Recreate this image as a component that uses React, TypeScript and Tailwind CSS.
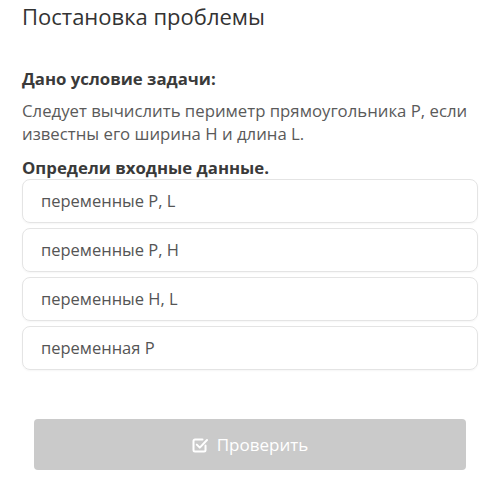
const options = ["переменные Р, L", "переменные Р, Н", "переменные Н, L", "переменная Р"];

function CheckSquareIcon() {
  return (
    <svg viewBox="0 0 16 16" className="h-[16px] w-[16px]" fill="none" stroke="currentColor" strokeWidth={2} strokeLinecap="round" strokeLinejoin="round">
      <path d="M13.5 8.5v4.5a1.5 1.5 0 0 1-1.5 1.5H3a1.5 1.5 0 0 1-1.5-1.5V4A1.5 1.5 0 0 1 3 2.5h7.5" />
      <path d="M4.8 7.6l3 3L15 3" />
    </svg>
  );
}

export default function App() {
  return (
    <div className="h-[501px] w-[500px] bg-white font-['Open_Sans',sans-serif] px-[22px]">
      <h1 className="pt-[1px] text-[22px] leading-[30px] text-[#333]">Постановка проблемы</h1>

      <h2 className="mt-[36px] text-[16.8px] font-bold leading-[24px] text-[#3a3a3a]">Дано условие задачи:</h2>
      <p className="mt-[8px] text-[16.75px] leading-[23px] text-[#5a5a5a]">
        Следует вычислить периметр прямоугольника Р, если известны его ширина Н и длина L.
      </p>
      <h3 className="mt-[12px] text-[16.8px] font-bold leading-[22px] text-[#3a3a3a]">Определи входные данные.</h3>

      <div className="mt-0 flex flex-col gap-[5px]">
        {options.map((o) => (
          <div
            key={o}
            className="flex h-[44px] items-center rounded-[8px] border border-[#e4e4e4] px-[18px] text-[16.5px] text-[#555] shadow-[0_1px_2px_rgba(0,0,0,0.04)]"
          >
            {o}
          </div>
        ))}
      </div>

      <div className="mt-[49px] px-[12px]">
        <button
          type="button"
          className="flex h-[51px] w-full items-center justify-center gap-[9px] rounded-[4px] bg-[#cacaca] text-[17px] text-white"
        >
          <CheckSquareIcon />
          Проверить
        </button>
      </div>
    </div>
  );
}
